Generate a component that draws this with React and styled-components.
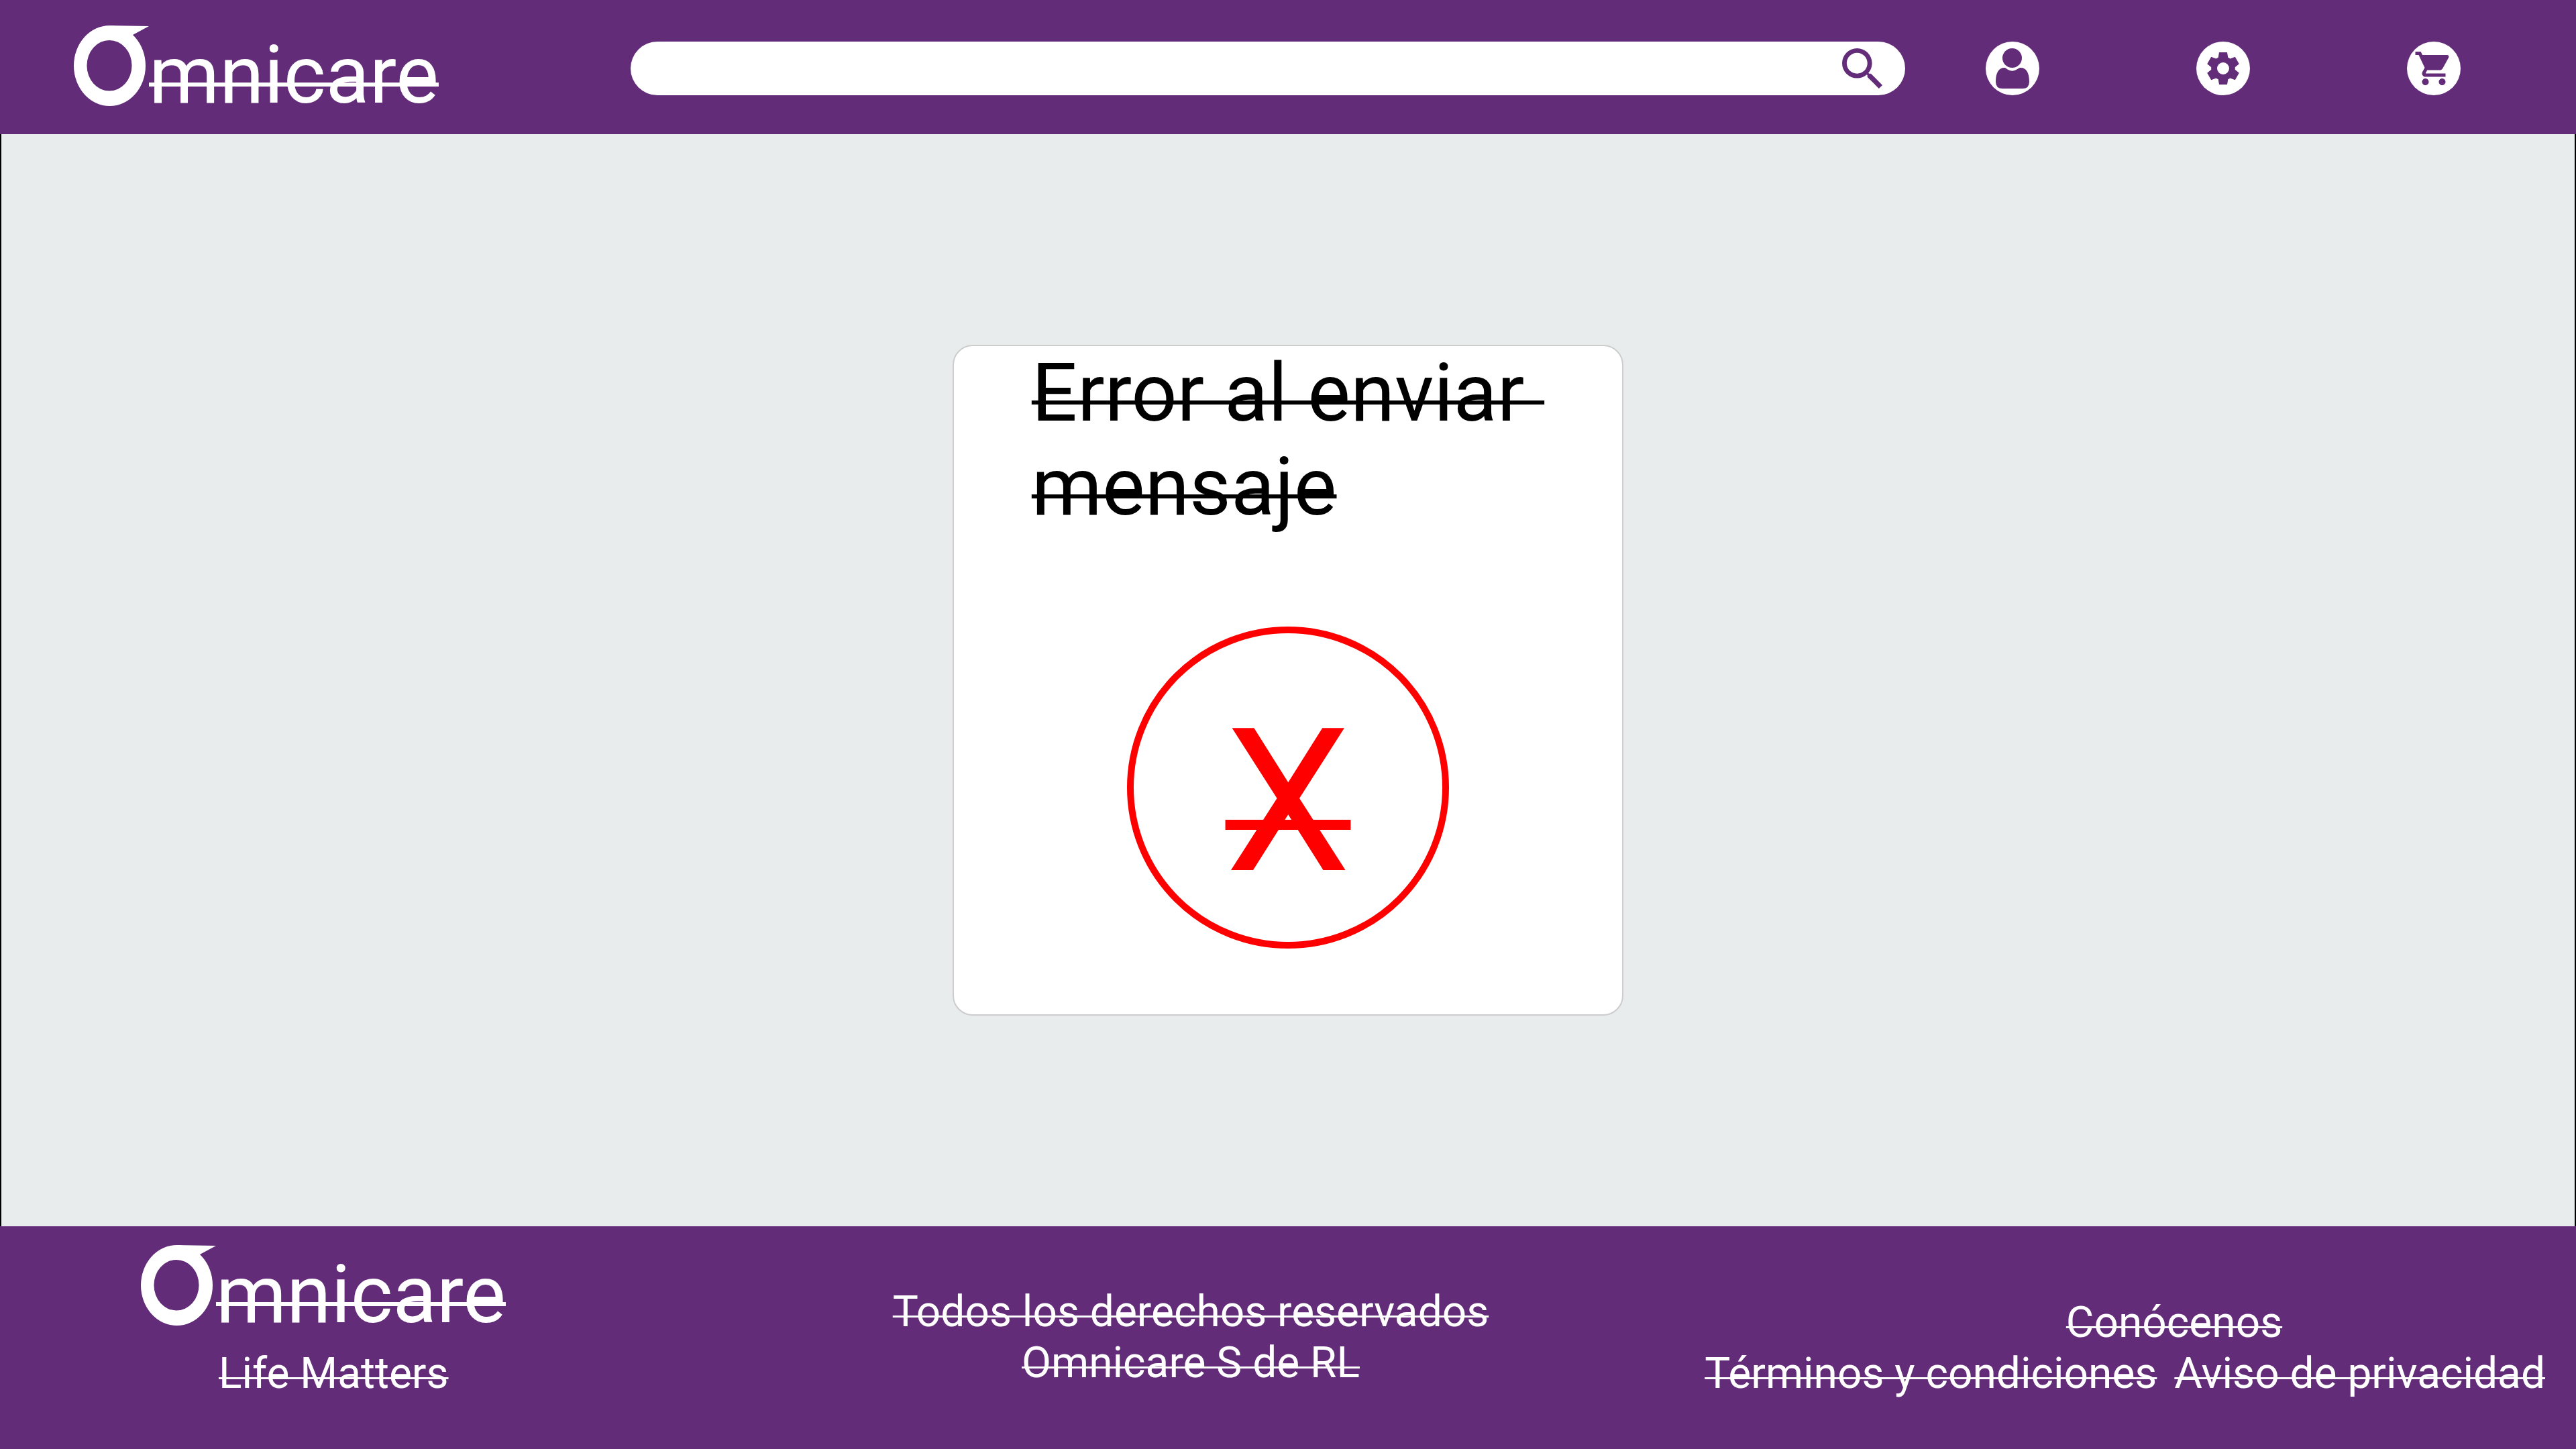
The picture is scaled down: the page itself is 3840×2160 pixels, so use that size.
import React from "react";
import styled, { createGlobalStyle, css } from "styled-components";
import { MdSearch, MdShoppingCart } from "react-icons/md";

const PURPLE = "#632c79";

const GlobalStyle = createGlobalStyle`
  *, *::before, *::after { box-sizing: border-box; }
  html, body, #root { height: 100%; }
  body {
    margin: 0;
    background: #e8ecec;
    font-family: Roboto, "Liberation Sans", sans-serif;
    font-weight: 400;
  }
`;

/* A thin strike that runs a quarter em above the baseline. */
const struck = css`
  text-decoration: underline;
  text-decoration-thickness: 0.05em;
  text-decoration-skip-ink: none;
  text-underline-offset: -0.25em;
`;

const Page = styled.div`
  display: flex;
  flex-direction: column;
  min-height: 100%;
`;

const Header = styled.header`
  display: flex;
  align-items: flex-start;
  padding: 38px 172px 18px 110px;
  background: ${PURPLE};
`;

const Brand = styled.a`
  display: flex;
  align-items: flex-start;
  color: #fff;
  text-decoration: none;
`;

const Mark = styled.svg`
  display: block;
  flex: none;
  width: 112px;
  height: 120px;
`;

const Wordmark = styled.span`
  margin-top: 4px;
  font-size: 120px;
  line-height: 140px;
  ${struck}
`;

const Search = styled.form`
  display: flex;
  flex: 1;
  align-items: center;
  height: 80px;
  margin: 24px 120px 0 286px;
  padding: 0 34px 0 40px;
  border-radius: 40px;
  background: #fff;
`;

const SearchInput = styled.input`
  flex: 1;
  min-width: 0;
  height: 100%;
  padding: 0;
  border: 0;
  outline: 0;
  background: transparent;
  color: ${PURPLE};
  font: inherit;
  font-size: 40px;
`;

const SearchButton = styled.button`
  display: flex;
  padding: 0;
  border: 0;
  background: none;
  color: ${PURPLE};
  cursor: pointer;
`;

const Actions = styled.nav`
  display: flex;
  gap: 234px;
  margin-top: 24px;
`;

const RoundButton = styled.button`
  display: flex;
  align-items: center;
  justify-content: center;
  width: 80px;
  height: 80px;
  padding: 0;
  border: 0;
  border-radius: 50%;
  background: #fff;
  color: ${PURPLE};
  cursor: pointer;
`;

const Main = styled.main`
  display: flex;
  flex: 1;
  align-items: center;
  justify-content: center;
  border: solid #000;
  border-width: 0 2px;
`;

const Card = styled.section`
  display: flex;
  flex-direction: column;
  align-items: center;
  width: 1000px;
  padding-bottom: 98px;
  border: 2px solid #ccc;
  border-radius: 30px;
  background: #fff;
`;

const Title = styled.h1`
  margin: 0 0 138px;
  color: #000;
  font-size: 120px;
  font-weight: 400;
  line-height: 140px;
  white-space: pre;
  ${struck}
`;

const ErrorBadge = styled.div`
  display: flex;
  align-items: center;
  justify-content: center;
  width: 480px;
  height: 480px;
  padding-top: 44px;
  border: 10px solid #f00;
  border-radius: 50%;
  color: #f00;
  font-size: 298px;
  line-height: 350px;
  ${struck}
`;

const Footer = styled.footer`
  display: grid;
  grid-template-columns: 1010fr 1530fr 1300fr;
  min-height: 332px;
  background: ${PURPLE};
  color: #fff;
  font-size: 64px;
  line-height: 76px;
`;

const FooterBrand = styled.div`
  padding: 28px 0 0 210px;
`;

const Tagline = styled.p`
  margin: 10px 0 0 116px;
  ${struck}
`;

const Rights = styled.p`
  margin: 0;
  padding-top: 90px;
  text-align: center;
  ${struck}
`;

const FooterLinks = styled.nav`
  display: flex;
  flex-wrap: wrap;
  align-content: flex-start;
  justify-content: flex-end;
  column-gap: 26px;
  padding: 106px 46px 0 0;
`;

const LinkRow = styled.div`
  width: 100%;
  padding-left: 148px;
  text-align: center;
`;

const FooterLink = styled.a`
  color: inherit;
  ${struck}
`;

function Logo() {
  return (
    <Brand href="#" aria-label="Omnicare">
      <Mark viewBox="0 0 112 120" fill="currentColor" aria-hidden="true">
        <path
          fillRule="evenodd"
          d="M53.500 0A53.500 60 0 1 0 53.500 120A53.500 60 0 1 0 53.500 0ZM53 22A33.500 37.700 0 1 1 53 97.500A33.500 37.700 0 1 1 53 22Z"
        />
        <path d="M52 0L112 1L87 14.500L70 12Z" />
      </Mark>
      <Wordmark>mnicare</Wordmark>
    </Brand>
  );
}

function UserIcon() {
  return (
    <svg width="80" height="80" viewBox="0 0 80 80" fill="currentColor" aria-hidden="true">
      <circle cx="39.500" cy="24.500" r="14.500" />
      <path d="M28 39C30 39 31.500 41 34 42.300Q39.500 45 45 42.300C47.500 41 49.500 39 52 39C61 39 65 47 65 60Q65 70 55 70H25Q15 70 15 60C15 47 19 39 28 39Z" />
    </svg>
  );
}

function GearIcon() {
  return (
    <svg width="80" height="80" viewBox="-40 -40 80 80" fill="currentColor" aria-hidden="true">
      <path
        fillRule="evenodd"
        d="M-7.300 -16.200L-6 -24H6L7.300 -16.200Q9 -15.500 10.400 -14.400L17.800 -17.200L23.800 -6.800L17.700 -1.800Q18 0 17.700 1.800L23.800 6.800L17.800 17.200L10.400 14.400Q9 15.500 7.300 16.200L6 24H-6L-7.300 16.200Q-9 15.500 -10.400 14.400L-17.800 17.200L-23.800 6.800L-17.700 1.800Q-18 0 -17.700 -1.800L-23.800 -6.800L-17.800 -17.200L-10.400 -14.400Q-9 -15.500 -7.300 -16.200ZM0 -9A9 9 0 1 0 0 9A9 9 0 1 0 0 -9Z"
      />
    </svg>
  );
}

export default function App() {
  return (
    <>
      <GlobalStyle />
      <Page>
        <Header>
          <Logo />
          <Search role="search" onSubmit={(e) => e.preventDefault()}>
            <SearchInput type="search" aria-label="Buscar" />
            <SearchButton type="submit" aria-label="Buscar">
              <MdSearch size={60} viewBox="3 3 17.490 17.490" />
            </SearchButton>
          </Search>
          <Actions aria-label="Cuenta">
            <RoundButton type="button" aria-label="Perfil">
              <UserIcon />
            </RoundButton>
            <RoundButton type="button" aria-label="Ajustes">
              <GearIcon />
            </RoundButton>
            <RoundButton type="button" aria-label="Carrito">
              <MdShoppingCart size={60} />
            </RoundButton>
          </Actions>
        </Header>

        <Main>
          <Card role="alert">
            <Title>{"Error al enviar \nmensaje"}</Title>
            <ErrorBadge>X</ErrorBadge>
          </Card>
        </Main>

        <Footer>
          <FooterBrand>
            <Logo />
            <Tagline>Life Matters</Tagline>
          </FooterBrand>
          <Rights>
            Todos los derechos reservados
            <br />
            Omnicare S de RL
          </Rights>
          <FooterLinks aria-label="Enlaces">
            <LinkRow>
              <FooterLink href="#">Conócenos</FooterLink>
            </LinkRow>
            <FooterLink href="#">Términos y condiciones</FooterLink>
            <FooterLink href="#">Aviso de privacidad</FooterLink>
          </FooterLinks>
        </Footer>
      </Page>
    </>
  );
}
